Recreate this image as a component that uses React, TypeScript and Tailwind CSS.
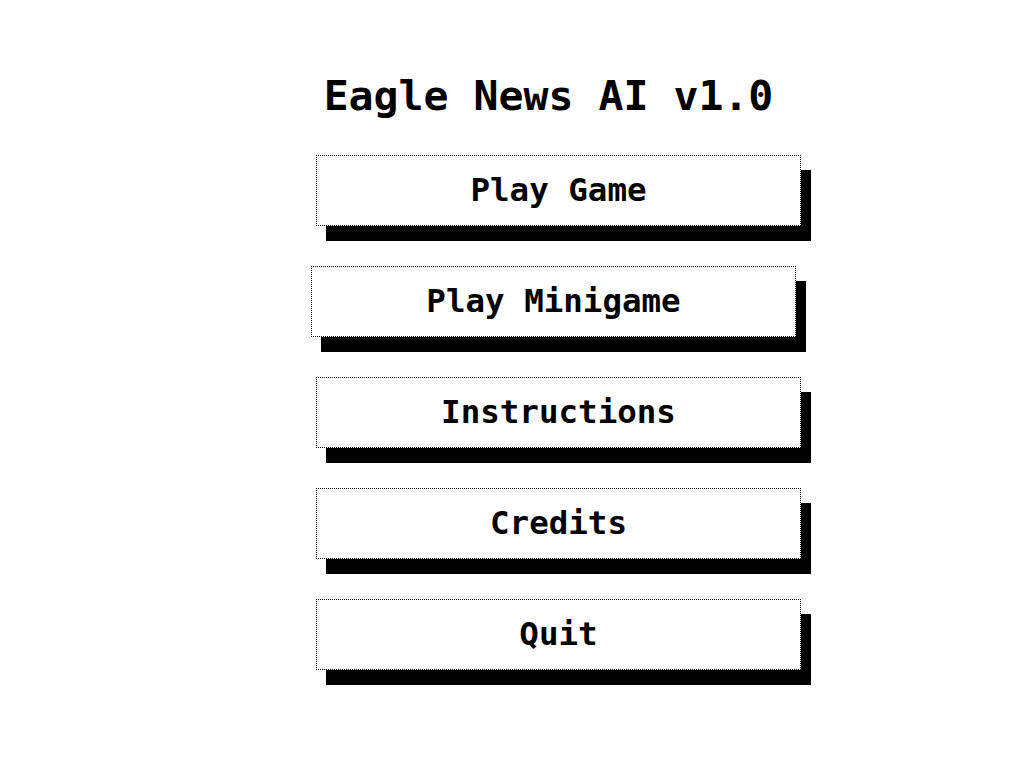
const items = ["Play Game", "Play Minigame", "Instructions", "Credits", "Quit"];

export default function App() {
  return (
    <div
      className="min-h-[768px] w-[1024px] bg-white text-black"
      style={{ fontFamily: '"DejaVu Sans Mono", "Liberation Mono", monospace' }}
    >
      <div className="ml-[316px] flex w-[485px] flex-col pt-[70px]">
        <h1 className="pr-[20px] text-center text-[41.5px] font-bold leading-[52px]">
          Eagle News AI v1.0
        </h1>
        <div className="mt-[33px] flex flex-col gap-[40px]">
          {items.map((label, i) => (
            <button
              key={label}
              className={
                "flex h-[71px] w-[485px] items-center justify-center border border-dotted border-black bg-white text-[32.5px] font-bold shadow-[10px_15px_0_0_#000]" +
                (i === 1 ? " -translate-x-[5px]" : "")
              }
            >
              {label}
            </button>
          ))}
        </div>
      </div>
    </div>
  );
}
